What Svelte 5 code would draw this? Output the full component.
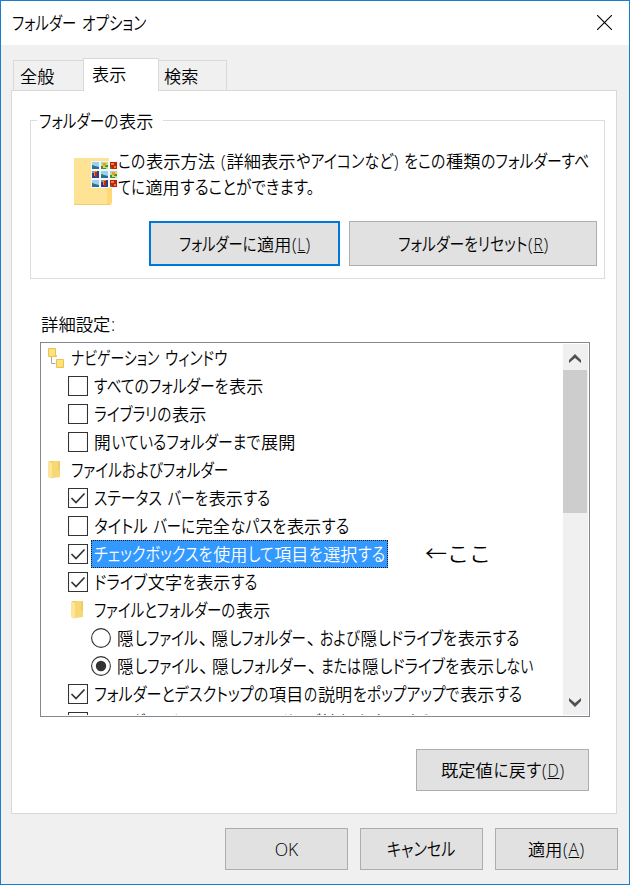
<script>
  const rows = [
    { icon: 'tree', level: 0, text: 'ナビゲーション ウィンドウ', width: 157 },
    { icon: 'check', level: 1, text: 'すべてのフォルダーを表示', width: 170 },
    { icon: 'check', level: 1, text: 'ライブラリの表示', width: 113 },
    { icon: 'check', level: 1, text: '開いているフォルダーまで展開', width: 202 },
    { icon: 'folder', level: 0, text: 'ファイルおよびフォルダー', width: 158 },
    { icon: 'check', level: 1, on: true, text: 'ステータス バーを表示する', width: 177 },
    { icon: 'check', level: 1, text: 'タイトル バーに完全なパスを表示する', width: 256 },
    { icon: 'check', level: 1, on: true, selected: true, text: 'チェックボックスを使用して項目を選択する', width: 292 },
    { icon: 'check', level: 1, on: true, text: 'ドライブ文字を表示する', width: 164 },
    { icon: 'folder', level: 1, text: 'ファイルとフォルダーの表示', width: 177 },
    { icon: 'radio', level: 2, text: '隠しファイル、隠しフォルダー、および隠しドライブを表示する', width: 403 },
    { icon: 'radio', level: 2, on: true, text: '隠しファイル、隠しフォルダー、または隠しドライブを表示しない', width: 417 },
    { icon: 'check', level: 1, on: true, text: 'フォルダーとデスクトップの項目の説明をポップアップで表示する', width: 429 },
    { icon: 'check', level: 1, text: 'フォルダーのヒントにファイル サイズ情報を表示する', width: 338 },
  ]

  // thumbnails on the big folder: l = landscape, g = garden, r = flower, m = balloons
  const thumbs = ['lgr', 'mlg', 'lmr']

  const fixed = { kanji: 17.5, paren: 5.5, space: 5, comma: 13, colon: 5 }
  const latin = { L: 8, R: 10, D: 12, A: 11 }

  function kind(c) {
    if (c === ' ') return 'space'
    if (c === ':') return 'colon'
    if (c === '、') return 'comma'
    if (/[()]/.test(c)) return 'paren'
    if (/[A-Z]/.test(c)) return 'latin'
    return /[\u3001-\u30ff]/.test(c) ? 'kana' : 'kanji'
  }

  function weight(c) {
    if (/[ぁぃぅぇぉっゃゅょァィゥェォッャュョ。]/.test(c)) return 0.84
    if (/[しトリ]/.test(c)) return 0.86
    return 1
  }

  // Kanji keep their full width, the kana between them share what is left
  function layout(text, width) {
    const runs = []
    for (const c of text) {
      const type = kind(c)
      const last = runs.at(-1)
      if (last && last.type === type) last.text += c
      else runs.push({ type, text: c })
    }
    let total = 0
    let used = 0
    for (const r of runs) {
      if (r.type === 'kana') {
        r.weight = [...r.text].reduce((sum, c) => sum + weight(c), 0)
        total += r.weight
      } else {
        r.width = r.type === 'latin' ? latin[r.text] : fixed[r.type] * r.text.length
        used += r.width
      }
    }
    const unit = total ? (width - used) / total : 0
    let x = 0
    for (const r of runs) {
      if (r.type === 'kana') r.width = r.weight * unit
      r.x = x
      x += r.width
    }
    return runs.filter((r) => r.type !== 'space')
  }
</script>

{#snippet label(text, width)}
  <svg class="label" {width} height="24">
    {#each layout(text, width) as run}
      <text
        class={run.type}
        x={run.x + 0.1}
        y="18.8"
        textLength={run.type === 'comma' || run.type === 'colon' ? undefined : run.width - 0.8}
        lengthAdjust="spacingAndGlyphs">{run.text}</text>
      {#if run.type === 'latin'}
        <path class="underline" d="M{run.x} 20.5h{run.width}" />
      {/if}
    {/each}
  </svg>
{/snippet}

{#snippet folder()}
  <svg class="icon" width="18" height="20">
    <path fill="#f0cc68" d="M2 1h11v16l-9 1-2-1z" />
    <path fill="#ffe599" d="M1 1l4 2v16l-4-2z" />
    <path fill="#f8d775" d="M5 3l2-2h4v10h2v6H5z" />
  </svg>
{/snippet}

<div class="dialog">
  <header>
    {@render label('フォルダー オプション', 135)}
    <svg class="close" width="15" height="15">
      <path d="M0 0l15 15M15 0L0 15" />
    </svg>
  </header>

  <nav>
    <div class="tab">{@render label('全般', 35)}</div>
    <div class="tab active">{@render label('表示', 35)}</div>
    <div class="tab last">{@render label('検索', 35)}</div>
  </nav>

  <main>
    <section class="group">
      <div class="legend">{@render label('フォルダーの表示', 115)}</div>
      <div class="info">
        <svg class="big-folder" width="46" height="50">
          <path fill="#ffe394" d="M0 2h35v25l3 3v18H0z" />
          <path fill="#ffd978" d="M33 32h5v15l-5 1z" />
          <path fill="#f3cb69" d="M0 48h37v1H0z" />
          {#each thumbs as line, r}
            {#each line as thumb, c}
              <g transform="translate({17 + c * 9} {5 + r * 9})">
                <path fill="#f4f6f8" d="M0 0h9v9H0z" />
                {#if thumb === 'l'}
                  <path fill="#9cd0f3" d="M1 1h7v7H1z" />
                  <path fill="#286c98" d="M1 4l3 1 4 1v2H1z" />
                  <path fill="#358451" d="M1 4l2 1 1 1H1z" />
                {:else if thumb === 'g'}
                  <path fill="#c4df78" d="M1 1h7v7H1z" />
                  <path fill="#a5cdf0" d="M1 1h3v2H1z" />
                  <path fill="#4a8b35" d="M1 5h2v2h3v1H1zM5 4h3v2H5z" />
                  <path fill="#e6a124" d="M3 2h3v3H3z" />
                {:else if thumb === 'r'}
                  <path fill="#bf2118" d="M1 1h7v7H1z" />
                  <path fill="#ef851b" d="M2 2h3v2H2zM5 5h2v2H5z" />
                  <path fill="#487a2d" d="M1 6h2v2H1z" />
                {:else}
                  <path fill="#263f90" d="M1 1h7v7H1z" />
                  <path fill="#ef851b" d="M3 1h3v5H3z" />
                  <path fill="#c9261c" d="M4 2h2v5H4z" />
                  <path fill="#59a5df" d="M1 1h2v2H1z" />
                {/if}
              </g>
            {/each}
          {/each}
        </svg>
        <div class="description">
          {@render label('この表示方法 (詳細表示やアイコンなど) をこの種類のフォルダーすべ', 472)}
          {@render label('てに適用することができます。', 197)}
        </div>
      </div>
      <div class="actions">
        <button class="focus">{@render label('フォルダーに適用(L)', 132)}</button>
        <button>{@render label('フォルダーをリセット(R)', 151)}</button>
      </div>
    </section>

    <div class="caption">{@render label('詳細設定:', 75)}</div>
    <div class="list">
      <div class="rows">
        {#each rows as row}
          <div class="row level{row.level}">
            <div class="slot">
              {#if row.icon === 'check'}
                <svg width="20" height="20">
                  <path class="box" d="M.5.5h19v19H.5z" />
                  {#if row.on}<path class="tick" d="M3.500 10l4.500 4.500 8.500-9" />{/if}
                </svg>
              {:else if row.icon === 'radio'}
                <svg width="20" height="20">
                  <circle class="box" cx="10" cy="10" r="9.4" />
                  {#if row.on}<circle class="dot" cx="10" cy="10" r="5.2" />{/if}
                </svg>
              {:else if row.icon === 'tree'}
                <svg class="icon" width="18" height="20">
                  <path fill="none" stroke="#a9a9a9" d="M4.500 9v6.500h4" />
                  <path fill="#ffe27d" stroke="#e8c44f" d="M1.500.5h7v8h-7zM9.500 11.500h7v8h-7z" />
                  <path fill="#efca56" d="M7 7h3v2H7zM15 18h2v2h-2z" />
                </svg>
              {:else}
                {@render folder()}
              {/if}
            </div>
            <div class="name" class:selected={row.selected}>{@render label(row.text, row.width)}</div>
            {#if row.selected}
              <svg class="note" width="68" height="24">
                <text x="0" y="19" textLength="66" lengthAdjust="spacingAndGlyphs">←ここ</text>
              </svg>
            {/if}
          </div>
        {/each}
      </div>
      <div class="scrollbar">
        <svg width="24" height="26"><path d="M6 16v3l6-5 6 5v-3l-6-6z" /></svg>
        <div class="thumb"></div>
        <svg width="24" height="26"><path d="M6 9v3l6 6 6-6V9l-6 5z" /></svg>
      </div>
    </div>

    <div class="restore">
      <button>{@render label('既定値に戻す(D)', 124)}</button>
    </div>
  </main>

  <footer>
    <button><span class="ok">OK</span></button>
    <button>{@render label('キャンセル', 69)}</button>
    <button>{@render label('適用(A)', 57)}</button>
  </footer>
</div>

<style>
  :global(body) {
    margin: 0;
  }

  .dialog,
  .dialog * {
    box-sizing: border-box;
  }

  .dialog {
    display: flex;
    flex-direction: column;
    width: 630px;
    height: 885px;
    border: 1px solid #1a7dcd;
    background: #f0f0f0;
    color: #000;
    font-family: 'Noto Sans CJK JP', sans-serif;
    font-size: 17.5px;
    font-weight: 350;
    overflow: hidden;
  }

  svg {
    display: block;
    flex: none;
  }

  .label {
    overflow: visible;
    fill: currentColor;
  }

  .kana,
  .comma {
    font-size: 18.5px;
    font-feature-settings: 'palt';
  }

  .latin,
  .paren,
  .colon,
  .ok {
    font-family: 'Open Sans', 'Noto Sans', sans-serif;
    font-weight: 360;
  }

  .underline {
    stroke: currentColor;
  }

  header {
    display: flex;
    align-items: center;
    justify-content: space-between;
    height: 44px;
    padding: 0 17px 1px 11px;
    background: #fff;
  }

  .close {
    stroke: #000;
    stroke-width: 1.1;
    fill: none;
  }

  nav {
    display: flex;
    align-items: flex-end;
    height: 45px;
    padding-left: 12px;
  }

  .tab {
    display: flex;
    align-items: center;
    width: 71px;
    height: 30px;
    padding-left: 6px;
    border: 1px solid #d9d9d9;
    border-bottom: 0;
  }

  .tab.active {
    z-index: 1;
    width: 76px;
    height: 33px;
    margin: 0 -1px -1px;
    padding: 0 0 2px 8px;
    background: #fff;
  }

  .tab.last {
    width: 69px;
    padding-left: 5px;
  }

  main {
    width: 606px;
    height: 724px;
    margin-left: 10px;
    padding: 29px 11px 0 18px;
    border: 1px solid #d9d9d9;
    background: #fff;
  }

  .group {
    width: 575px;
    height: 159px;
    border: 1px solid #dcdcdc;
  }

  .legend {
    width: 126px;
    height: 24px;
    margin: -12px 0 0 6px;
    padding-left: 2px;
    background: #fff;
  }

  .info {
    display: flex;
    height: 60px;
    margin-top: 16px;
    padding-left: 43px;
  }

  .big-folder {
    margin-top: 7px;
  }

  .description {
    display: flex;
    flex-direction: column;
    gap: 2px;
    margin-left: -2px;
  }

  .actions {
    display: flex;
    gap: 9px;
    margin-top: 12px;
    padding-left: 118px;
  }

  button {
    display: flex;
    align-items: center;
    justify-content: center;
    width: 123px;
    height: 42px;
    padding: 0;
    border: 1px solid #adadad;
    background: #e1e1e1;
    color: #000;
    font: inherit;
  }

  .actions button {
    width: 248px;
    height: 45px;
  }

  .actions .focus {
    width: 191px;
    border: 2px solid #0078d7;
  }

  .caption {
    margin: 33px 0 6px 11px;
  }

  .list {
    display: flex;
    justify-content: space-between;
    width: 550px;
    height: 375px;
    margin-left: 10px;
    padding: 1px;
    border: 1px solid #828790;
  }

  .rows {
    flex: 1;
    overflow: hidden;
  }

  .row {
    display: flex;
    align-items: center;
    height: 28px;
    padding-left: 3px;
  }

  .level1 {
    padding-left: 26px;
  }

  .level2 {
    padding-left: 49px;
  }

  .slot {
    width: 23px;
  }

  .box {
    fill: #fff;
    stroke: #333;
    stroke-width: 1.1;
  }

  .tick {
    fill: none;
    stroke: #333;
    stroke-width: 1.7;
  }

  .dot {
    fill: #333;
  }

  .icon {
    margin-left: 2px;
  }

  .name {
    display: flex;
    align-items: center;
    height: 28px;
    padding: 0 1px 0 2px;
    border: 1px solid transparent;
  }

  .selected {
    border: 1px dotted #1a1a1a;
    background: #39f;
    color: #fff;
  }

  .note {
    margin-left: 37px;
    font-size: 21px;
  }

  .scrollbar {
    display: flex;
    flex-direction: column;
    width: 25px;
    background: #f0f0f0;
    fill: #505050;
  }

  .thumb {
    width: 24px;
    height: 143px;
    margin-bottom: auto;
    background: #cdcdcd;
  }

  .restore {
    display: flex;
    justify-content: flex-end;
    margin: 32px 16px 0 0;
  }

  .restore button {
    width: 173px;
  }

  footer {
    display: flex;
    justify-content: flex-end;
    gap: 12px;
    padding: 14px 11px 0 0;
  }
</style>
